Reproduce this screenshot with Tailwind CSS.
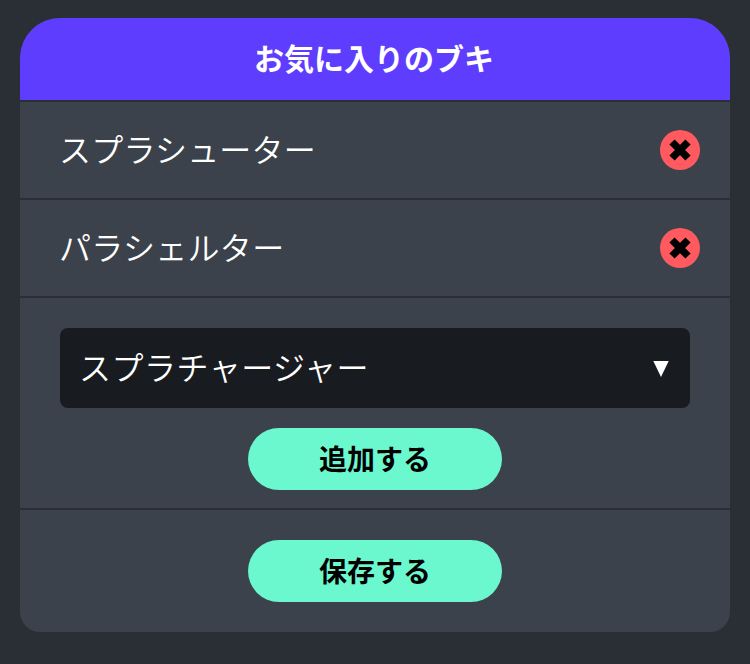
<!DOCTYPE html>
<html lang="ja">
<head>
    <meta charset="UTF-8">
    <meta name="viewport" content="width=device-width, initial-scale=1.0">
    <title>お気に入りのブキ</title>
    <script src="https://cdn.jsdelivr.net/npm/@tailwindcss/browser@4"></script>
</head>
<body class="h-[664px] overflow-hidden bg-[#2a2e35] px-5 pt-[18px] font-['Noto_Sans_CJK_JP','Noto_Sans',sans-serif] text-white">
    <div class="w-[710px] overflow-hidden rounded-t-[40px] rounded-b-[20px] bg-[#3c424b]">
        <h1 class="flex h-[84px] items-center justify-center border-b-2 border-[#2a2e35] bg-[#5f3dff] pr-0.5 pb-1 text-[30px] font-bold">お気に入りのブキ</h1>

        <div class="flex h-[98px] items-center justify-between border-b-2 border-[#2a2e35] pr-[30px] pl-[39px] text-[32px] font-[350]">
            <span class="pb-1 tracking-[0.2px]">スプラシューター</span>
            <button class="flex h-10 w-10 items-center justify-center rounded-full bg-[#ff5a5f]">
                <svg class="h-6 w-6" viewBox="0 0 24 24" stroke="#000" stroke-width="7.4"><path d="M4 4l16 16M20 4 4 20"/></svg>
            </button>
        </div>
        <div class="flex h-[98px] items-center justify-between border-b-2 border-[#2a2e35] pr-[30px] pl-[39px] text-[32px] font-[350]">
            <span class="pb-1 tracking-[0.3px]">パラシェルター</span>
            <button class="flex h-10 w-10 items-center justify-center rounded-full bg-[#ff5a5f]">
                <svg class="h-6 w-6" viewBox="0 0 24 24" stroke="#000" stroke-width="7.4"><path d="M4 4l16 16M20 4 4 20"/></svg>
            </button>
        </div>

        <div class="flex h-[212px] flex-col items-center gap-5 border-b-2 border-[#2a2e35] pt-[30px]">
            <div class="flex h-20 w-[630px] items-center justify-between rounded-lg bg-[#181b20] pr-[21px] pl-[19px] text-[32px] font-[350]">
                <span class="pb-1 tracking-[0.5px]">スプラチャージャー</span>
                <svg class="mt-0.5 h-4 w-4" viewBox="0 0 16 16"><path d="M0.3 0h15.4L8 16z" fill="#fff"/></svg>
            </div>
            <button class="h-[62px] w-[254px] rounded-full bg-[#6bf8cf] pb-0.5 text-[28px] font-bold text-black">追加する</button>
        </div>

        <div class="flex h-[122px] justify-center pt-[30px]">
            <button class="h-[62px] w-[254px] rounded-full bg-[#6bf8cf] pb-0.5 text-[28px] font-bold text-black">保存する</button>
        </div>
    </div>
</body>
</html>
